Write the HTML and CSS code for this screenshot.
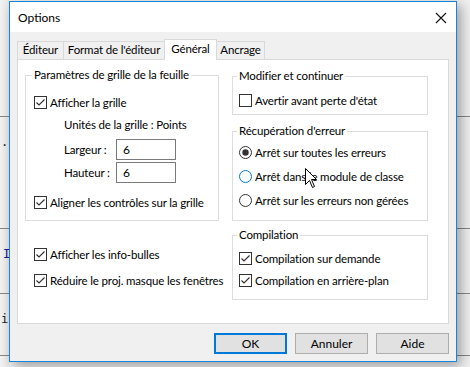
FILE: index.html
```html
<!DOCTYPE html>
<html lang="fr">
  <head>
    <meta charset="UTF-8" />
    <meta name="viewport" content="width=device-width, initial-scale=1.0" />
    <title>Options</title>
    <link rel="stylesheet" href="styles.css">
  </head>
  <body>
    <!-- editeur de code derriere la boite de dialogue -->
    <div class="editor">
      <div class="code-line l1"></div>
      <div class="code-line l2"><span class="tok">.c</span></div>
      <div class="code-line l3"><span class="tok kw">I</span></div>
      <div class="code-line l4"><span class="tok">i</span></div>
      <div class="code-line l5"></div>
    </div>

    <!-- boite de dialogue Options -->
    <div class="dialog">
      <div class="titlebar">
        <span class="title">Options</span>
        <span class="close">
          <svg width="12" height="12" viewBox="0 0 12 12"><path d="M1 1 L11 11 M11 1 L1 11" stroke="#111" stroke-width="1.1" fill="none"/></svg>
        </span>
      </div>

      <div class="dialog-body">
        <div class="tabs">
          <div class="tab w-editeur">Éditeur</div>
          <div class="tab w-format">Format de l'éditeur</div>
          <div class="tab w-general active">Général</div>
          <div class="tab w-ancrage">Ancrage</div>
        </div>

        <div class="tab-panel">
          <div class="col col-left">
            <fieldset class="group grid-group">
              <legend>Paramètres de grille de la feuille</legend>
              <label class="check row-first">
                <span class="box"><svg width="11" height="11" viewBox="0 0 11 11"><path d="M1.5 5.5 L4 8 L9.5 2.5" stroke="#333" stroke-width="1.2" fill="none"/></svg></span>
                Afficher la grille
              </label>
              <div class="units">Unités de la grille : Points</div>
              <div class="field field-w"><span class="field-label">Largeur :</span><input class="num" type="text" value="6"></div>
              <div class="field field-h"><span class="field-label">Hauteur :</span><input class="num" type="text" value="6"></div>
              <label class="check row-align">
                <span class="box"><svg width="11" height="11" viewBox="0 0 11 11"><path d="M1.5 5.5 L4 8 L9.5 2.5" stroke="#333" stroke-width="1.2" fill="none"/></svg></span>
                Aligner les contrôles sur la grille
              </label>
            </fieldset>

            <label class="check loose tips">
              <span class="box"><svg width="11" height="11" viewBox="0 0 11 11"><path d="M1.5 5.5 L4 8 L9.5 2.5" stroke="#333" stroke-width="1.2" fill="none"/></svg></span>
              Afficher les info-bulles
            </label>
            <label class="check loose reduce">
              <span class="box"><svg width="11" height="11" viewBox="0 0 11 11"><path d="M1.5 5.5 L4 8 L9.5 2.5" stroke="#333" stroke-width="1.2" fill="none"/></svg></span>
              Réduire le proj. masque les fenêtres
            </label>
          </div>

          <div class="col col-right">
            <fieldset class="group edit-group">
              <legend>Modifier et continuer</legend>
              <label class="check">
                <span class="box"></span>
                Avertir avant perte d'état
              </label>
            </fieldset>

            <fieldset class="group error-group">
              <legend>Récupération d'erreur</legend>
              <label class="radio">
                <svg width="13" height="13" viewBox="0 0 13 13"><circle cx="6.5" cy="6.5" r="6" fill="#fff" stroke="#333"/><circle cx="6.5" cy="6.5" r="3.2" fill="#333"/></svg>
                Arrêt sur toutes les erreurs
              </label>
              <label class="radio">
                <svg width="13" height="13" viewBox="0 0 13 13"><circle cx="6.5" cy="6.5" r="6" fill="#fff" stroke="#0078d7"/></svg>
                Arrêt dans le module de classe
              </label>
              <label class="radio">
                <svg width="13" height="13" viewBox="0 0 13 13"><circle cx="6.5" cy="6.5" r="6" fill="#fff" stroke="#333"/></svg>
                Arrêt sur les erreurs non gérées
              </label>
            </fieldset>

            <fieldset class="group compile-group">
              <legend>Compilation</legend>
              <label class="check">
                <span class="box"><svg width="11" height="11" viewBox="0 0 11 11"><path d="M1.5 5.5 L4 8 L9.5 2.5" stroke="#333" stroke-width="1.2" fill="none"/></svg></span>
                Compilation sur demande
              </label>
              <label class="check second">
                <span class="box"><svg width="11" height="11" viewBox="0 0 11 11"><path d="M1.5 5.5 L4 8 L9.5 2.5" stroke="#333" stroke-width="1.2" fill="none"/></svg></span>
                Compilation en arrière-plan
              </label>
            </fieldset>
          </div>
        </div>

        <div class="buttons">
          <button class="btn btn-default">OK</button>
          <button class="btn">Annuler</button>
          <button class="btn">Aide</button>
        </div>
      </div>
    </div>

    <!-- pointeur de souris -->
    <svg class="cursor" width="13" height="21" viewBox="0 0 13 21">
      <path d="M0.5 0.5 L0.5 16.5 L4.5 12.5 L7.5 19.5 L9.5 18.5 L6.5 11.5 L11.5 11.5 Z" fill="#fff" stroke="#000" stroke-width="1"/>
    </svg>
  </body>
</html>
```

FILE: styles.css
```css
  body {
    margin: 0;
    width: 470px;
    height: 367px;
    overflow: hidden;
    position: relative;
    background-color: #f0f0f0;
    font-family: Lato, "Noto Sans", sans-serif;
    font-size: 11.5px;
    letter-spacing: -0.15px;
    color: #000;
  }

  /* Editeur en arriere-plan */
  .editor {
    background: linear-gradient(to right, #f3f3f3 0px, #e9e9e9 9px, #f0f0f0 9px);
  }

  .code-line {
    box-sizing: border-box;
    border-bottom: 1px solid #888;
    padding-top: 18px;
    font-family: "DejaVu Sans Mono", monospace;
    font-size: 12px;
    letter-spacing: 0;
    line-height: 14px;
  }

  .l1 { height: 117px; }
  .l2 { height: 112px; }
  .l3 { height: 65px; }
  .l4 { height: 62px; }
  .l5 { height: 11px; border-bottom: none; }

  .tok {
    margin-left: 1px;
    color: #222;
  }

  .kw {
    margin-left: 3px;
    color: #1d1d8f;
  }

  /* Boite de dialogue */
  .dialog {
    position: absolute;
    left: 9px;
    top: 1px;
    width: 448px;
    height: 361px;
    box-sizing: border-box;
    border: 1px solid #1883d7;
    background-color: #f0f0f0;
    box-shadow: 4px 4px 12px rgba(0, 0, 0, 0.35);
  }

  .titlebar {
    height: 30px;
    background-color: #fff;
    display: flex;
    align-items: center;
    justify-content: space-between;
    padding: 0 9px 0 8px;
  }

  .title {
    font-size: 12px;
    letter-spacing: 0;
    padding-top: 1px;
  }

  .close {
    display: flex;
    padding-top: 1px;
  }

  .dialog-body {
    padding: 7px 7px 0 7px;
  }

  /* Onglets */
  .tabs {
    display: flex;
    align-items: flex-end;
    height: 20px;
  }

  .tab {
    box-sizing: border-box;
    height: 18px;
    border: 1px solid #d9d9d9;
    border-bottom: none;
    background-color: #f0f0f0;
    text-align: center;
    line-height: 16px;
    white-space: nowrap;
    margin-left: -1px;
  }

  .tab:first-child {
    margin-left: 0;
  }

  .tab.active {
    height: 21px;
    margin-bottom: -1px;
    background-color: #fff;
    position: relative;
    z-index: 1;
    line-height: 17px;
  }

  .w-editeur { width: 47px; }
  .w-format { width: 102px; }
  .w-general { width: 53px; }
  .w-ancrage { width: 49px; }

  .tab-panel {
    box-sizing: border-box;
    height: 265px;
    background-color: #fff;
    border: 1px solid #d9d9d9;
    padding: 8px 20px 0 7px;
    display: grid;
    grid-template-columns: 194px 196px;
    column-gap: 13px;
    align-items: start;
  }

  .col {
    display: flex;
    flex-direction: column;
  }

  /* Cadres de groupe */
  .group {
    margin: 0;
    border: 1px solid #dcdcdc;
    padding: 0 6px;
    min-width: 0;
  }

  .group legend {
    padding: 0 2px;
    margin-left: -2px;
    line-height: 14px;
    white-space: nowrap;
  }

  .grid-group {
    padding: 12px 8px 10px 8px;
  }

  .edit-group {
    margin-top: 1px;
    padding-top: 9px;
    padding-bottom: 6px;
  }

  .error-group {
    margin-top: 9px;
    padding-top: 2px;
    padding-bottom: 8px;
  }

  .compile-group {
    margin-top: 7px;
    padding-top: 8px;
    padding-bottom: 11px;
  }

  /* Cases a cocher et boutons radio */
  .check,
  .radio {
    display: flex;
    align-items: center;
    height: 16px;
    white-space: nowrap;
  }

  .radio {
    height: 24px;
  }

  .box {
    box-sizing: border-box;
    width: 13px;
    height: 13px;
    border: 1px solid #333;
    background-color: #fff;
    margin-right: 3px;
    display: flex;
    flex-shrink: 0;
  }

  .radio svg {
    margin-right: 3px;
    flex-shrink: 0;
  }

  .units {
    margin: 7px 0 0 30px;
    line-height: 16px;
    white-space: nowrap;
  }

  .field {
    display: flex;
    align-items: center;
    margin-left: 30px;
  }

  .field-w {
    margin-top: 6px;
  }

  .field-h {
    margin-top: 2px;
  }

  .field-label {
    width: 52px;
    white-space: nowrap;
  }

  .num {
    box-sizing: border-box;
    width: 60px;
    height: 21px;
    border: 1px solid #7a7a7a;
    padding: 0 6px;
    font-family: Lato, "Noto Sans", sans-serif;
    font-size: 12px;
    color: #000;
    outline: none;
  }

  .row-align {
    margin-top: 11px;
  }

  .loose {
    margin-left: 9px;
  }

  .tips {
    margin-top: 25px;
  }

  .reduce {
    margin-top: 10px;
  }

  .second {
    margin-top: 6px;
  }

  /* Boutons du bas */
  .buttons {
    display: flex;
    justify-content: flex-end;
    gap: 8px;
    margin-top: 9px;
  }

  .btn {
    box-sizing: border-box;
    width: 73px;
    height: 21px;
    background-color: #e1e1e1;
    border: 1px solid #adadad;
    font-family: Lato, "Noto Sans", sans-serif;
    font-size: 12px;
    color: #000;
    padding: 0;
  }

  .btn-default {
    border: 2px solid #0078d7;
  }

  .cursor {
    position: absolute;
    left: 305px;
    top: 168px;
  }
```
